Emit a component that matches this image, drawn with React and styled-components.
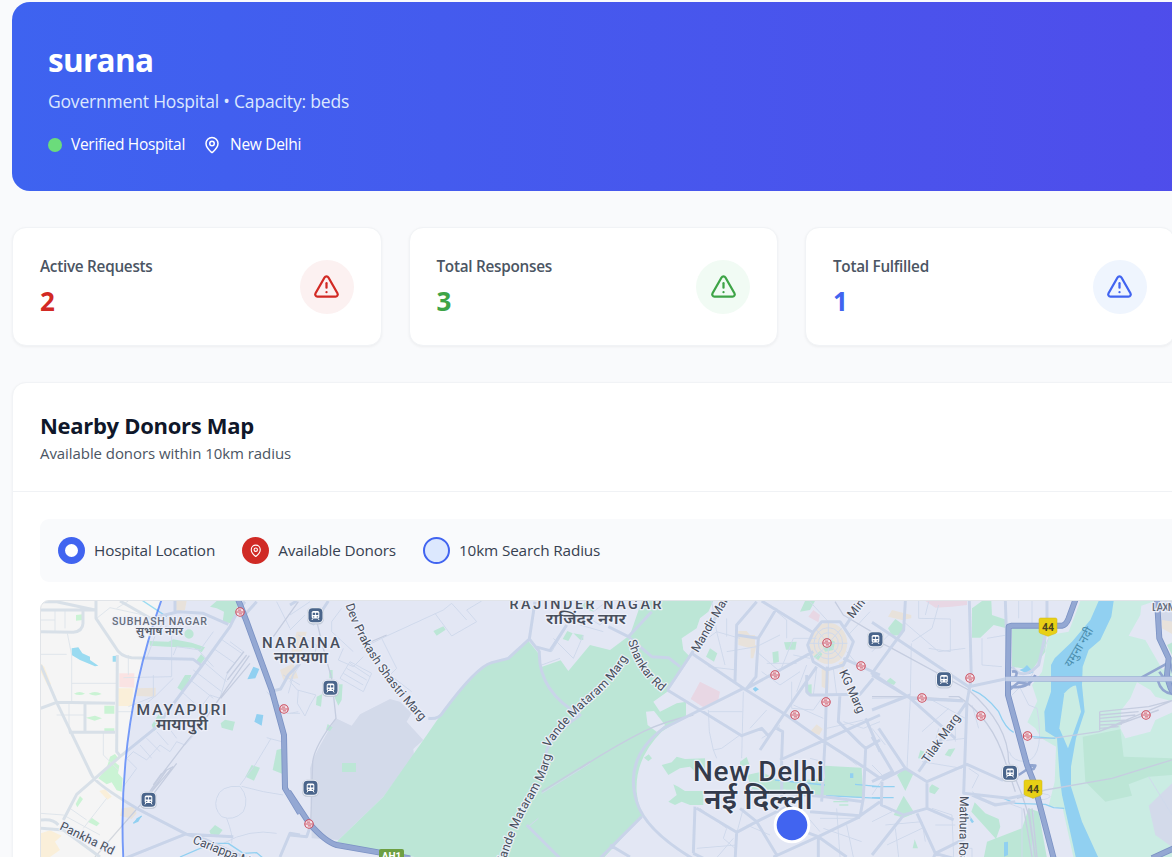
import React from 'react';
import styled, { createGlobalStyle } from 'styled-components';
import { MapPin, TriangleAlert } from 'lucide-react';

const Global = createGlobalStyle`
  * { box-sizing: border-box; }
  html, body { margin: 0; height: 100%; overflow: hidden; }
  body { background: #f9fafc; font-family: "Open Sans", "Noto Sans", sans-serif; }
  h1, h2, p { margin: 0; }
`;

const Page = styled.main`
  width: 1583px;
  height: 857px;
  overflow: hidden;
  padding: 2px 12px 0;
  display: flex;
  flex-direction: column;
  gap: 36px;
`;

const Banner = styled.header`
  flex: none;
  height: 189px;
  padding: 35px 36px;
  border-radius: 18px;
  color: #fff;
  background: linear-gradient(to right, #3e63f0, #5446e9);
`;

const HospitalName = styled.h1`
  font-size: 31.5px;
  line-height: 45px;
  font-weight: 700;
  letter-spacing: -0.7px;
`;

const HospitalInfo = styled.p`
  margin-top: 5px;
  font-size: 17.5px;
  line-height: 28px;
  color: #dbe7fe;
  letter-spacing: -0.19px;
`;

const StatusRow = styled.div`
  display: flex;
  align-items: center;
  gap: 18px;
  margin-top: 18px;
`;

const Status = styled.span`
  display: flex;
  align-items: center;
  gap: 9px;
  font-size: 15.5px;
  line-height: 23px;
  letter-spacing: -0.3px;
`;

const Dot = styled.i`
  width: 14px;
  height: 14px;
  border-radius: 50%;
  background: #6bdc7b;
`;

const Stats = styled.section`
  flex: none;
  display: grid;
  grid-template-columns: repeat(4, 1fr);
  gap: 27px;
`;

const StatCard = styled.article`
  height: 119px;
  padding: 0 27px;
  display: flex;
  align-items: center;
  justify-content: space-between;
  background: #fff;
  border: 1px solid #f1f3f6;
  border-radius: 14px;
  box-shadow: 0 1px 3px rgba(0, 0, 0, 0.05);
`;

const StatText = styled.div`
  padding-top: 3px;
`;

const StatLabel = styled.p`
  font-size: 15.3px;
  line-height: 23px;
  font-weight: 600;
  color: #4b5563;
  letter-spacing: -0.27px;
`;

const StatValue = styled.p`
  margin-top: 3px;
  font-size: 26px;
  line-height: 40px;
  font-weight: 700;
  color: ${(p) => p.$color};
`;

const IconDisc = styled.span`
  width: 54px;
  height: 54px;
  display: grid;
  place-items: center;
  border-radius: 50%;
  color: ${(p) => p.$color};
  background: ${(p) => p.$bg};
`;

const MapCard = styled.section`
  flex: none;
  height: 700px;
  background: #fff;
  border: 1px solid #f1f3f6;
  border-radius: 14px;
  box-shadow: 0 1px 3px rgba(0, 0, 0, 0.05);
`;

const MapHeader = styled.header`
  height: 109px;
  padding: 27px;
  border-bottom: 1px solid #f0f2f5;
`;

const MapTitle = styled.h2`
  font-size: 22px;
  line-height: 31px;
  font-weight: 700;
  letter-spacing: -0.3px;
  color: #0f172a;
`;

const MapSubtitle = styled.p`
  font-size: 15px;
  line-height: 24px;
  color: #4b5563;
  letter-spacing: -0.07px;
`;

const MapBody = styled.div`
  padding: 27px;
  display: flex;
  flex-direction: column;
  gap: 18px;
`;

const Legend = styled.div`
  height: 63px;
  padding: 0 18px;
  display: flex;
  align-items: center;
  gap: 27px;
  border-radius: 9px;
  background: #f9fafc;
`;

const LegendItem = styled.span`
  display: flex;
  align-items: center;
  gap: 9px;
  font-size: 15.3px;
  line-height: 23px;
  letter-spacing: -0.15px;
  color: #374151;
`;

const Swatch = styled.i`
  width: 27px;
  height: 27px;
  display: grid;
  place-items: center;
  border-radius: 50%;
  color: #fff;
  background: ${(p) => p.$bg};
  border: ${(p) => (p.$border ? `2px solid ${p.$border}` : '0')};
`;

const Hole = styled.i`
  width: 13px;
  height: 13px;
  border-radius: 50%;
  background: #fff;
`;

const MapFrame = styled.div`
  height: 420px;
  overflow: hidden;
  border: 1px solid #e1e4e8;
  border-radius: 9px;
  background: #f5f5f5;
`;

const MapSvg = styled.svg`
  display: block;
  font-family: Roboto, "Noto Sans Devanagari", "Noto Sans", sans-serif;
`;

const GREEN = '#caf3d4';
const PALE = '#d9fae2';
const WATER = '#9adbf1';
const SAND = '#faefd9';
const PINK = '#fae3e3';
const GREY = '#e3e6ea';
const LAND = '#f5f5f5';

/* Each sheet of the map is digitised at three units to the pixel. */
const sheets = [
  {
    x: 0,
    areas: [
      [WATER, 'M215 160L235 157L247 175L270 185L270 195L295 212L285 214L240 195L215 180Z M338 183L352 182L348 200L338 200Z M760 215L778 222L766 250L742 253Z M770 357L790 360L785 392L763 380Z M410 670L425 662L415 680L400 686Z'],
      [GREEN, 'M228 60L248 58V75L228 77Z M630 35L650 18H715L708 55L692 85L668 80L672 50L650 40Z M448 138L505 140L520 133L575 143L615 157L605 172L580 158L500 155L450 152Z M553 117a14 14 0 1 0 28 0a14 14 0 1 0-28 0Z M588 198L603 178L615 190L600 210Z M222 296Q238 286 255 296Q238 304 222 296Z M266 296Q286 286 305 297Q286 306 266 296Z M313 332H343V356H313Z M257 368L285 362L306 370L284 377Z M313 400H343V412H313Z M330 485L345 477L355 490L345 502L358 512L354 535L368 550L365 590L350 586L335 562L320 568L295 550L320 520Z M662 385L675 374L705 380L698 407L665 398Z M830 465L850 460L848 537L818 525Z M736 545L755 510L780 518L762 557Z M628 708L645 690L668 705L655 722L632 718Z M532 278L555 240L574 240L565 265L545 288Z M455 390L480 352L497 365L490 385L462 408Z M240 603L249 612L232 637L227 627Z M263 680L275 668L299 685L290 694Z'],
      [PINK, 'M358 235H403V278L358 276Z'],
      [SAND, 'M355 280H400L395 333H355Z M410 280L467 278V305L408 303Z M122 205L133 215L153 268L143 272L122 230Z M122 715L150 706L185 722L165 740L180 765L150 786H122Z M298 588L315 583L335 605L322 614Z M365 640L400 635L410 655L395 672L360 662Z M525 18H560L555 45L530 50Z M840 225L880 205L895 250L850 255Z'],
    ],
    thin: 'M165 45V110 M122 75H165 M195 45V100 M122 178H200 M202 115L215 180V320 M215 265H350 M170 360H255 M207 325V412 M310 412V480L355 525 M290 70L330 38L430 60L500 95 M350 40L385 18 M515 70V245L370 248 M385 180V240 M460 240V305L385 335 M500 70L470 110L440 190 M350 350H400 M520 180L530 155L600 165L640 110 M590 230L545 290L600 340L630 300L660 310L680 240L730 170L690 140 M640 215L590 160 M565 250L640 310 M580 225L665 290 M610 200L680 260 M640 160L705 205 M660 130L725 175 M380 490L400 470L440 495L480 450L510 470L530 440L555 450L600 400 M400 470L380 490L410 520L370 575 M420 450L455 490 M440 430L480 470 M470 410L505 450 M500 390L530 430 M800 428L845 440 M812 432L765 510L720 570 M650 610Q660 570 720 574Q750 610 730 650Q700 680 665 665Q640 640 650 610 M725 574L790 590L850 600 M680 670Q700 720 695 745 M670 745Q750 700 830 715 M800 290L860 355L900 355 M850 240L900 270 M250 700L320 610 M122 655L190 660L300 720 M210 640L260 675 M865 295L880 240L900 210 M830 20L870 100 M410 350L470 300L520 250',
    rail: 'M285 786L425 625L480 545L560 440L610 380L748 182 M425 625L515 520M440 610L500 525L520 515 M450 610L530 505 M460 570L485 535 M680 235L732 170 M682 255L740 180 M662 310L750 205 M820 125L895 20',
    road: 'M122 45H285 M122 110L220 112Q248 108 249 85V45 M288 18V70L345 155Q360 185 395 188L580 193L605 212 M122 340L170 322L345 325 M122 210L170 322L275 540Q285 565 410 640L560 718L620 735L740 790 M352 180L350 470L362 485 M207 412H345 M255 325V410 M190 675L230 598L360 485L465 400L605 213L690 95Q710 50 735 20 M350 800L560 716 M122 700L190 705L300 786 M122 675Q160 670 175 690 M122 20H170L285 45 M360 18L455 72L485 62L535 50L610 55L685 88 M525 18V55 M560 718L700 725 M810 290L842 282L865 240L900 205 M840 786L870 715L900 720 M725 70L770 20',
    water: 'M425 15L500 65 M540 786L635 745H685L730 775L770 773L790 790 M400 685L425 663',
    high: 'M715 15L740 80L815 285L852 420L855 580L900 655',
  },
  {
    x: 290,
    areas: [
      [GREY, 'M138 370L185 392L210 358L300 312L330 320L365 355L350 380L400 435L370 462L372 480L280 605L145 735L65 730L60 520Q70 480 138 370Z'],
      [GREEN, 'M715 137L745 175L752 217L812 196L835 228L900 150L960 165L1020 120L1055 18H1270L1255 50L1230 70L1220 100L1175 130L1180 165L1200 185L1132 290L1090 320L1110 350L1160 325L1188 320V362L1115 410Q1035 490 1040 590Q1045 640 1060 660L940 790H400L270 770L140 740L280 605L400 435L445 370Q540 240 600 205L650 190Z M430 108L460 94L467 104L440 122Z M156 504H198V531H156Z M118 225H128V250H118Z M135 268H158L155 315L145 332L135 310Z M80 305L97 297L93 335L78 330Z M113 387L128 397L120 408L108 404Z M818 132L832 108L848 115L835 138Z M850 115L880 120V135L870 134Z M870 35L890 18H910V50Z'],
      [SAND, 'M0 185L20 110H50L40 160L10 210Z'],
    ],
    thin: 'M60 20L0 60 M45 60L0 105 M25 120L80 150L70 200L20 180 M20 210L0 260L22 285L78 300 M25 285L22 325L45 363L60 330L78 300 M0 355L25 350 M155 40L125 80V110L190 170 M160 160L145 195L190 215L220 185 M150 250L180 200L245 235L220 290L150 250 M160 235L220 270 M170 220L230 255 M180 205L240 245 M275 130L320 220L300 240L365 290 M215 160L275 130L460 45L485 25 M435 55L485 123L560 80L530 45L575 18 M485 25L530 75 M740 155L785 170L830 95 M755 210L810 190 M850 190L880 120 M790 130L850 190 M755 595L900 505 M715 695L745 670',
    rail: 'M78 70L105 180L118 225L125 250L138 370Q75 450 68 500L62 690 M220 150L290 120 M755 590L900 500',
    road: 'M415 370Q445 375 460 350Q560 215 605 203L655 190L718 132L735 20 M718 132L748 170Q745 290 870 360Q770 430 768 480 M735 155L780 167L830 90 M710 690L810 790 M0 720L50 725L62 690 M68 90L115 18 M0 30L20 18',
    water: '',
    high: 'M-5 590L58 685Q105 740 140 750L270 773L360 790',
  },
  {
    x: 580,
    areas: [
      [LAND, 'M198 350L222 348L255 390L232 412L203 390Z'],
      [GREEN, 'M378 185L390 160L412 175L402 200Z M577 172L595 168L597 200L580 206Z M612 142L650 140L646 164H618Z M660 50L675 18H705L690 45Z M192 488L206 478L216 490L205 499Z M245 510L275 502L290 485L315 492L375 490V535H350L330 515L300 520L265 540Z M265 620L290 600L280 568L295 575L315 588H370V630H330L305 620L285 630Z M735 512L845 518L850 610L735 600Z M480 500L500 486L508 508L480 515Z M500 540L545 530L600 560L735 550V600L640 600L520 590Z M676 270L695 268V300L680 298Z M760 618L805 618V622H760Z M778 628H805V632H778Z'],
      [PINK, 'M332 312L360 260L420 290L415 315L370 337Z M685 65L700 45L720 60L715 82Z'],
      [SAND, 'M475 108H500L510 120H525V150H530L520 190H512V160L475 150Z M688 145A57 62 0 0 1 802 145A57 62 0 0 1 688 145Z M690 410L710 388L728 402L718 420Z M725 220H748L745 285L725 275Z M775 205L795 195L790 225Z'],
      [GREEN, 'M728 150L740 128L765 140L760 165L735 170Z M700 185L720 168L727 178L715 195Z'],
      [WATER, 'M518 282L526 275L537 283L526 290Z M810 535H820V549H810Z'],
    ],
    thin: 'M395 18L410 110 M440 125V70 M350 155L410 110L435 210 M410 110L480 130 M385 215L470 225 M440 170L530 155L600 120 M530 170L600 230L640 130L710 130 M560 205H650 M620 130V75L590 50 M640 180L690 190 M545 230L600 270L660 230 M385 345L388 410L400 465L425 460L480 420 M385 350H488 M490 290L485 490 M400 465L410 490 M560 345L510 400 M600 390L560 420 M635 260V340L700 345L725 310 M640 330L730 370 M680 210L650 290 M710 220L700 300 M760 220L770 300 M800 170L850 230 M805 120L870 50 M690 20L745 80 M790 380L850 400L900 380 M740 400L850 375 M740 440L830 510 M640 475L730 440 M690 490L730 500 M545 430L600 395 M360 640L440 700L430 730L465 760 M470 715L490 640 M350 760L470 750 M500 690L570 720 M400 800L460 730 M660 640L720 710 M770 640L780 786 M720 670H840 M730 700L845 740 M610 640L660 690 M800 690L820 786 M745 80L745 220M690 145H802M705 100L785 190M785 100L705 190 M715 145a30 32 0 1 0 60 0a30 32 0 1 0-60 0 M702 145a43 47 0 1 0 86 0a43 47 0 1 0-86 0 M20 65L60 90L90 60 M0 90L70 110 M40 50L80 20',
    rail: 'M0 520Q110 450 190 410Q250 380 340 360 M765 20L790 60L900 125',
    road: 'M145 125L215 50 M85 95L145 125L215 185L265 188L300 215 M262 285L335 175L440 18 M262 285L360 345L485 422L545 400L565 422 M335 175L490 280 M545 18L695 110 M530 20L470 90L465 260 M470 120L535 130L590 40 M535 130L528 245L500 280L700 170 M490 280L360 345L250 400Q130 490 170 620Q200 720 390 820 M490 280L615 358L725 435L850 515L900 550 M610 360L540 465 M610 360L710 215 M590 400L608 410L605 490 M600 495L730 437L900 360 M742 215L735 440L725 620 M790 190L900 240 M795 95L900 -60 M725 80L780 80L820 140L805 180L790 210L740 225L700 200L683 150L700 110Z M680 240V290L690 300L840 298L880 250 M780 295L775 380L840 445L857 460L900 435 M857 460L850 610L840 665 M857 370L900 470 M500 585L735 605L850 620 M185 665L60 790 M90 750L150 786 M345 635L340 775 M350 640L470 712L530 680L660 615 M470 712L465 800 M480 640L530 680L590 780 M590 640L620 690L715 725L840 665 M715 725V790 M580 786L715 725L800 786 M690 650L840 662L900 620 M605 490V620 M340 775L390 800',
    water: 'M585 555L735 570M825 568L900 575 M738 602L900 610',
    high: '',
  },
  {
    x: 872,
    areas: [
      [PALE, 'M625 18H905V790H605L572 640L530 632L548 560L552 455L508 430L490 400L466 382L496 318L480 270L510 230L530 120L590 110Z'],
      [LAND, 'M850 18L808 32L805 60L770 122L820 135L872 225L905 190V18Z M748 345L775 310L795 262L835 285L850 305L905 320V350L850 375L835 410L760 430L745 400Z'],
      [GREY, 'M905 560L830 632L850 720L905 760Z M822 18H905V90H870L850 18Z'],
      [GREEN, 'M420 100H525L520 170L480 225L420 215Z M300 40L330 18H358L360 60L405 75L403 100L365 90L325 128L300 128Z M48 100L70 72L95 90L90 120L60 122Z M40 262L55 248L72 262L66 270Z M75 540L98 520L125 535L100 588Z M65 660L95 602L128 655L95 668Z M138 490L145 466L158 470L155 492Z M218 480L230 463L250 460L235 485Z M298 650L308 622L340 655L380 672L385 695L372 732Z M335 790L345 740L450 700L470 640L500 650L525 790Z M632 425L745 403L755 485L905 490V540L830 545L770 568L780 602L700 620L640 560Z M122 760L128 733L138 760Z M172 578L180 568L202 580L188 598L172 592Z M885 150L905 140V190Z'],
      [WATER, 'M680 18H725L718 65L685 135L650 165L632 215L630 270L638 350L612 430L597 515V575L630 680L680 790H612L590 690L570 600L563 545L555 430L520 408L517 350L537 290V210L548 190L600 140L655 75Z M442 225L455 220L465 210L485 232L470 238Z M396 742L408 740V780L396 785Z M285 650L306 680L300 685L280 655Z'],
      [PALE, 'M577 295Q600 270 612 272L627 350L588 460L562 400Z'],
      [PINK, 'M160 18H285V30L240 35L190 38Z'],
      [SAND, 'M48 65L60 45L118 60V70L90 75Z M870 75L905 80V120L870 100Z'],
    ],
    thin: 'M140 18V70L235 72V170L170 160 M170 20L160 60 M200 30L180 100L120 140 M95 80L200 170L280 160 M330 130V210L390 215 M345 130L405 120 M440 18V70 M480 18V85 M118 145L115 300 M0 310L100 308 M50 120L0 170 M170 310L280 370 M115 310L105 520 M200 400L190 440L280 430 M230 340L150 410 M300 330L320 400 M250 370V440 M0 400L40 450 M0 600L30 555 M40 690L150 680L160 740 M0 680L60 650 M20 620L60 650 M180 640L240 660L245 786 M70 700L80 786 M190 690L250 690 M45 750L150 700 M260 760L300 760V786 M300 590L350 625H410L450 640 M830 545L900 660 M150 500L270 520 M440 270L470 330L495 340Q520 480 465 500Q420 500 412 470 M420 300L480 240L530 130 M460 600Q530 590 535 605Q520 620 480 610 M450 640V786 M485 650L480 786 M0 510L30 540 M300 580L320 540L290 520',
    rail: 'M0 130L60 160L290 285Q410 390 410 500L450 600L470 660L490 786 M230 305H260Q360 370 400 500L430 590 M0 305H100L275 315 M680 410L905 315 M683 350L830 335L905 315 M683 360L800 350M683 370L790 360M683 380L770 375M683 390L750 387M683 400L740 395 M485 430H540L680 410L860 345 M435 610L520 585L720 550L905 493 M455 640L480 786M470 640L490 786M480 640L495 786 M683 350V405',
    road: 'M0 82L290 275L410 250 M292 18L298 250L285 320L278 510L275 595L410 610L460 600L490 570 M100 18L95 105L0 235L115 310L275 318 M0 240L115 310L250 430 M0 345L115 300 M0 425L62 530L0 560 M30 555L100 520L165 560L285 508L390 555L440 540 M100 520L20 400 M30 560L28 630L95 660L165 640V565 M95 660L0 780 M135 655L190 775L280 730 M165 640L245 675 M285 320L140 530 M190 775L180 800M190 775L280 800 M400 18L408 250 M525 18V95L500 210Q450 260 420 215 M300 600L370 630L430 620',
    water: 'M300 285Q340 300 380 350Q400 400 425 412 M395 610L430 625L520 628L545 638L577 640 M0 575H68 M0 608H65 M480 425L550 430',
    high: 'M408 250L410 95L420 92H570Q582 90 590 70L610 15 M408 250V300L465 510L485 560L545 790 M855 15L862 130L890 190L885 240Q895 290 905 292 M840 790L905 760',
    ramp: 'M410 275Q470 285 490 240 M412 285L440 262L475 268 M420 230Q445 225 425 255 M465 510L490 512L485 522L470 525 M440 540L485 510 M808 248L890 203 M858 258Q868 295 905 297 M890 190L905 240 M862 230L880 255',
    bridge: 'M400 252H905',
  },
];

const trains = [[315.500, 615.500], [330.500, 688], [310.500, 788], [148.500, 800], [875.500, 639.500], [944, 679.500], [1010, 773]];
const metros = [[240, 612], [284, 709], [309, 824], [827, 643], [775, 675], [861, 666], [826, 702], [795, 715], [970, 678], [922, 698], [981, 716], [1027.500, 736], [1146, 715]];
const shields = [[1048, 627], [1033, 789]];

const Label = styled.text`
  font-size: ${(p) => p.$size}px;
  font-weight: ${(p) => p.$weight || 500};
  fill: ${(p) => p.$fill || '#474e5c'};
  stroke: rgba(238, 241, 250, 0.9);
  stroke-width: 2.6px;
  stroke-linejoin: round;
  paint-order: stroke;
`;

const streets = [
  ['dev', 'M345.500 605Q363 660 421 721', 'Dev Prakash Shastri Marg', 140],
  ['vandeUpper', 'M549 748Q568 720 592 700T629 656', 'Vande Mataram Marg', 120],
  ['vandeLower', 'M504 866Q516 826 532 800T551 755', 'Vande Mataram Marg', 121],
  ['shankar', 'M628 641Q636 672 662 692', 'Shankar Rd', 62],
  ['mandir', 'M698 653L732 594', 'Mandir Marg', 68],
  ['kg', 'M839 672L858 714', 'KG Marg', 46],
  ['minto', 'M853 619L877 588', 'Minto Rd', 50],
  ['tilak', 'M928 764L961 717', 'Tilak Marg', 57],
  ['mathura', 'M960 796L959 870', 'Mathura Road', 73],
  ['pankha', 'M59 829L112 855', 'Pankha Rd', 59],
  ['cariappa', 'M192 843L258 869', 'Cariappa Marg', 78],
];

const places = [
  [159.5, 625, 95, 10.6, 'SUBHASH NAGAR', '#666d7b'],
  [301, 648, 78, 15, 'NARAINA'],
  [181.5, 714.5, 90, 15.5, 'MAYAPURI'],
  [585.5, 609, 152, 14.3, 'RAJINDER NAGAR'],
  [1164.5, 610.5, 25, 10.6, 'LAXM', '#666d7b'],
];

const hindiPlaces = [
  [159.5, 635, 47, 11, 'सुभाष नगर', '#555c6a'],
  [301, 662.5, 54, 15.5, 'नारायणा'],
  [182, 729.5, 52, 15.5, 'मायापुरी'],
  [586, 624, 80, 15, 'राजिंदर नगर'],
  [758.5, 809, 109, 29, 'नई दिल्ली', '#333a4b'],
];

function Roads({ field, color, width }) {
  return (
    <g fill="none" stroke={color} strokeWidth={width} strokeLinejoin="round">
      {sheets.map((s) => s[field] && (
        <path key={s.x} d={s[field]} transform={`translate(${s.x} 595) scale(.33333)`} />
      ))}
    </g>
  );
}

function CityMap() {
  return (
    <MapSvg width="1503" height="420" viewBox="41 601 1503 420">
      {sheets.map((s) => (
        <g key={s.x} transform={`translate(${s.x} 595) scale(.33333)`}>
          {s.areas.map(([fill, d], i) => <path key={i} d={d} fill={fill} />)}
        </g>
      ))}
      <Roads field="thin" color="#dfe5eb" width={3} />
      <Roads field="rail" color="#d4d8de" width={4} />
      <Roads field="water" color={WATER} width={4} />
      <Roads field="road" color="#d8e0e8" width={9} />
      <Roads field="ramp" color="#9cadcd" width={8} />
      <Roads field="high" color="#8398c0" width={18} />
      <Roads field="high" color="#9eafd0" width={13} />
      <Roads field="bridge" color="#a9b9d4" width={16} />
      <Roads field="bridge" color="#cfd8e5" width={12} />

      <circle cx="792" cy="825" r="669.500" fill="#3b66f0" fillOpacity=".09" stroke="#3f74fa" strokeOpacity=".7" strokeWidth="1.900" />

      {trains.map(([x, y]) => (
        <g key={`${x}-${y}`} transform={`translate(${x} ${y})`}>
          <rect x="-8.500" y="-8.500" width="17" height="17.500" rx="5.500" fill="#c3cbd9" />
          <rect x="-8" y="-8.300" width="16" height="16" rx="5" fill="#f3f5fa" />
          <rect x="-7" y="-7.300" width="14" height="14" rx="4" fill="#4a658b" />
          <rect x="-3.800" y="-4.600" width="7.600" height="7.600" rx="1.600" fill="#fff" />
          <path d="M-2.800-2.800H-.4V-.4H-2.800ZM.4-2.800H2.800V-.4H.4Z" fill="#4a658b" />
          <path d="M-2.600 3L-3.600 4.500M2.600 3L3.600 4.500" stroke="#fff" strokeWidth="1" />
          <path d="M-2.600 1.400H-1.200M1.200 1.400H2.600" stroke="#4a658b" strokeWidth="1" />
        </g>
      ))}
      {metros.map(([x, y]) => (
        <g key={`${x}-${y}`} transform={`translate(${x} ${y})`} fill="none" stroke="#cb4657">
          <circle r="4.200" fill="#f3e9f0" strokeWidth="1.100" />
          <path d="M-3.500 0H3.500M-2.200-1.900H1.200M-1.200 1.900H2.200" strokeWidth=".9" />
        </g>
      ))}
      {shields.map(([x, y]) => (
        <g key={`${x}-${y}`} transform={`translate(${x} ${y})`}>
          <path d="M-7.500-9H7.500Q9-9 9-7.500V4.500Q9 6 7.500 6.500L2 8.500Q0 10 -2 8.500L-7.500 6.500Q-9 6-9 4.500V-7.500Q-9-9-7.500-9Z" fill="#e8d015" stroke="#cdb61a" strokeWidth=".5" />
          <text y="3.500" textAnchor="middle" fontSize="10.500" fontWeight="700" fill="#4a4520">44</text>
        </g>
      ))}
      <rect x="379" y="849" width="25" height="14" rx="2" fill="#6d9f42" />
      <text x="391.500" y="860" textAnchor="middle" fontSize="10" fontWeight="700" fill="#fff">AH1</text>

      {places.map(([x, y, length, size, name, fill]) => (
        <Label key={name} x={x - length / 2} y={y} textLength={length} $size={size} $fill={fill} $weight={500}>{name}</Label>
      ))}
      {hindiPlaces.map(([x, y, length, size, name, fill]) => (
        <Label key={name} x={x - length / 2} y={y} textLength={length} lengthAdjust="spacingAndGlyphs" $size={size} $fill={fill} $weight={600}>{name}</Label>
      ))}
      {streets.map(([id, d, name, length]) => (
        <g key={id}>
          <path id={id} d={d} fill="none" />
          <Label $size={12.2} $weight={400}>
            <textPath href={`#${id}`} textLength={length}>{name}</textPath>
          </Label>
        </g>
      ))}
      <text transform="translate(1071 668) rotate(-59)" fontSize="12" fill="#4a8dad" textLength="44" lengthAdjust="spacingAndGlyphs">यमुना नदी</text>
      <Label x="693" y="781" textLength="131" $size={28} $fill="#333a4b">New Delhi</Label>

      <circle cx="792" cy="825" r="16.800" fill="#4164f0" stroke="#fff" strokeWidth="3" />
    </MapSvg>
  );
}

const stats = [
  ['Active Requests', 2, '#d22a24', '#fcf1f1'],
  ['Total Responses', 3, '#3ea447', '#f1fbf4'],
  ['Total Fulfilled', 1, '#4164f0', '#eff5fe'],
];

export default function App() {
  return (
    <>
      <Global />
      <Page>
        <Banner>
          <HospitalName>surana</HospitalName>
          <HospitalInfo>Government Hospital • Capacity: beds</HospitalInfo>
          <StatusRow>
            <Status><Dot />Verified Hospital</Status>
            <Status><MapPin size={18} strokeWidth={2} />New Delhi</Status>
          </StatusRow>
        </Banner>
        <Stats>
          {stats.map(([label, value, color, bg]) => (
            <StatCard key={label}>
              <StatText>
                <StatLabel>{label}</StatLabel>
                <StatValue $color={color}>{value}</StatValue>
              </StatText>
              <IconDisc $color={color} $bg={bg}><TriangleAlert size={27} strokeWidth={2} /></IconDisc>
            </StatCard>
          ))}
        </Stats>
        <MapCard>
          <MapHeader>
            <MapTitle>Nearby Donors Map</MapTitle>
            <MapSubtitle>Available donors within 10km radius</MapSubtitle>
          </MapHeader>
          <MapBody>
            <Legend>
              <LegendItem><Swatch $bg="#4164f0"><Hole /></Swatch>Hospital Location</LegendItem>
              <LegendItem><Swatch $bg="#d02a25"><MapPin size={13.5} strokeWidth={2} /></Swatch>Available Donors</LegendItem>
              <LegendItem><Swatch $bg="#dce8fe" $border="#4164f0" />10km Search Radius</LegendItem>
            </Legend>
            <MapFrame><CityMap /></MapFrame>
          </MapBody>
        </MapCard>
      </Page>
    </>
  );
}
